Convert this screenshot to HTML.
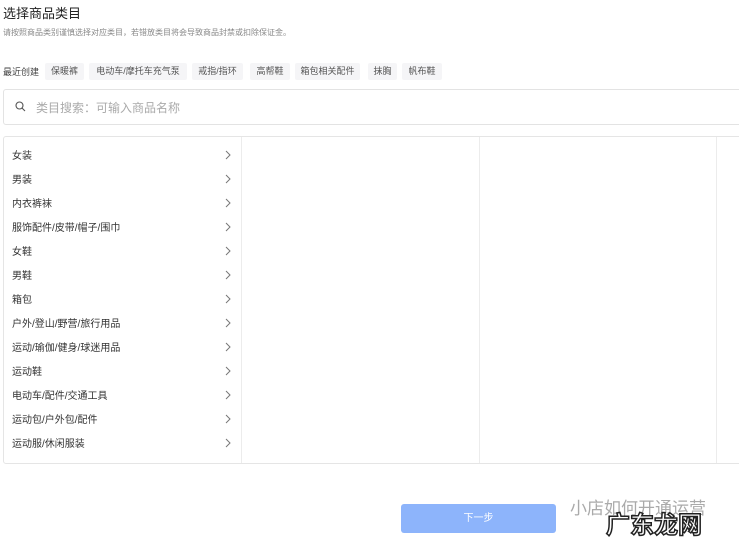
<!DOCTYPE html>
<html><head><meta charset="utf-8"><style>
body{margin:0;width:739px;height:545px;background:#fff;font-family:"Liberation Sans","Noto Sans CJK SC",sans-serif;position:relative;overflow:hidden;color:#333}
.a{position:absolute;white-space:nowrap}
.tag{position:absolute;top:63px;height:17px;line-height:17px;background:#f5f5f7;color:#555;font-size:9px;text-align:center;border-radius:2px}
.box{position:absolute;left:3px;top:136px;width:740px;height:326px;border:1px solid #e5e5e5;border-radius:3px}
.col{position:absolute;top:137px;width:1px;height:326px;background:#ececec}
.it{position:absolute;left:12px;font-size:10px;color:#333}
.ar{position:absolute;left:225px}
</style></head><body>
<div class="a" style="left:3px;top:3px;font-size:13px;color:#222">选择商品类目</div>
<div class="a" style="left:3px;top:27px;font-size:8px;color:#888">请按照商品类别谨慎选择对应类目，若错放类目将会导致商品封禁或扣除保证金。</div>
<div class="a" style="left:3px;top:65px;font-size:9px;color:#444">最近创建</div>
<div class="tag" style="left:45px;width:39px">保暖裤</div>
<div class="tag" style="left:89px;width:98px">电动车/摩托车充气泵</div>
<div class="tag" style="left:192px;width:51px">戒指/指环</div>
<div class="tag" style="left:250px;width:40px">高帮鞋</div>
<div class="tag" style="left:295px;width:65px">箱包相关配件</div>
<div class="tag" style="left:368px;width:29px">抹胸</div>
<div class="tag" style="left:402px;width:40px">帆布鞋</div>
<div class="a" style="left:3px;top:89px;width:740px;height:34px;border:1px solid #e3e3e3;border-radius:3px"></div>
<svg class="a" style="left:15px;top:101px" width="11" height="11" viewBox="0 0 11 11"><circle cx="4.5" cy="4.5" r="3.5" fill="none" stroke="#555" stroke-width="1.1"/><path d="M7 7L10 10" stroke="#555" stroke-width="1.1"/></svg>
<div class="a" style="left:36px;top:99px;font-size:12px;color:#aaa">类目搜索：可输入商品名称</div>
<div class="box"></div>
<div class="col" style="left:241px"></div>
<div class="col" style="left:479px"></div>
<div class="col" style="left:716px"></div>
<div class="it" style="top:147px">女装</div>
<div class="it" style="top:171px">男装</div>
<div class="it" style="top:195px">内衣裤袜</div>
<div class="it" style="top:219px">服饰配件/皮带/帽子/围巾</div>
<div class="it" style="top:243px">女鞋</div>
<div class="it" style="top:267px">男鞋</div>
<div class="it" style="top:291px">箱包</div>
<div class="it" style="top:315px">户外/登山/野营/旅行用品</div>
<div class="it" style="top:339px">运动/瑜伽/健身/球迷用品</div>
<div class="it" style="top:363px">运动鞋</div>
<div class="it" style="top:387px">电动车/配件/交通工具</div>
<div class="it" style="top:411px">运动包/户外包/配件</div>
<div class="it" style="top:435px">运动服/休闲服装</div>
<svg class="a" style="left:225px;top:150px" width="6" height="300" viewBox="0 0 6 300" fill="none" stroke="#777" stroke-width="1">
<path d="M1 1L5 5L1 9"/><path d="M1 25L5 29L1 33"/><path d="M1 49L5 53L1 57"/><path d="M1 73L5 77L1 81"/><path d="M1 97L5 101L1 105"/><path d="M1 121L5 125L1 129"/><path d="M1 145L5 149L1 153"/><path d="M1 169L5 173L1 177"/><path d="M1 193L5 197L1 201"/><path d="M1 217L5 221L1 225"/><path d="M1 241L5 245L1 249"/><path d="M1 265L5 269L1 273"/><path d="M1 289L5 293L1 297"/>
</svg>
<div class="a" style="left:401px;top:504px;width:155px;height:29px;background:#8db4fb;border-radius:3px;color:#fff;font-size:10px;text-align:center;line-height:29px">下一步</div>
<div class="a" style="left:570px;top:494px;font-size:17px;color:#aaa">小店如何开通运营</div>
<div class="a" style="left:606px;top:505px;font-size:24px;font-weight:bold;color:#fff;-webkit-text-stroke:1.5px #222">广东龙网</div>
</body></html>
